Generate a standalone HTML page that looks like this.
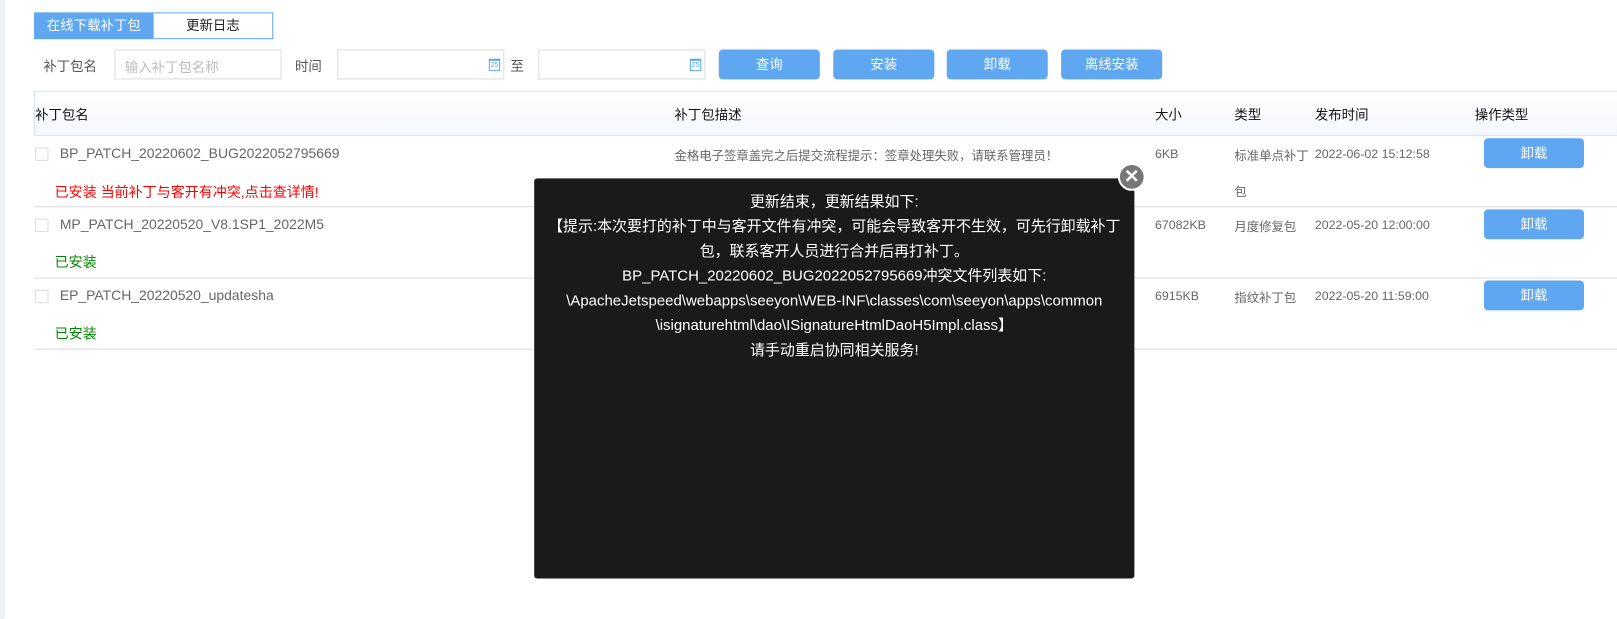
<!DOCTYPE html>
<html><head><meta charset="utf-8"><style>
*{margin:0;padding:0;box-sizing:border-box}
html,body{width:1617px;height:600px;overflow:hidden;background:#fff}
#w{position:absolute;left:0;top:0;width:1568px;height:582px;transform:scale(1.03125);transform-origin:0 0;font-family:"Liberation Sans","Noto Sans CJK SC",sans-serif;font-size:13px;color:#333}
.a{position:absolute;white-space:nowrap}
.btn{position:absolute;background:#5fa7f0;color:#fff;border-radius:4px;text-align:center;font-size:13px}
.inp{position:absolute;border:1px solid #dcdcdc;height:29px;top:48px;background:#fff}
.cal{position:absolute;right:3px;top:8px;width:11px;height:12px;border:1px solid #5fa7f0;border-top-width:2px;font-size:7px;color:#5fa7f0;text-align:center;line-height:9px}
.hl{position:absolute;left:33px;right:0;height:1px;background:#dcdcdc}
.cb{position:absolute;left:34px;width:13px;height:13px;border:1px solid #ddd}
.g{color:#666}
.dl{position:absolute;left:518px;top:173px;width:582px;height:388px;background:#1a1a1a;border-radius:3px;color:#fff;font-size:14.5px;text-align:center;line-height:24px;padding-top:11px}
</style></head><body><div id="w">
<div class="a" style="left:0;top:0;width:5px;height:600px;background:#eef2f7"></div>
<div class="a" style="left:33px;top:12px;width:116px;height:26px;background:#5fa7f0;color:#fff;text-align:center;line-height:26px">在线下载补丁包</div>
<div class="a" style="left:149px;top:12px;width:116px;height:26px;border:1px solid #5fa7f0;border-left:none;text-align:center;line-height:24px;color:#222">更新日志</div>
<div class="a" style="left:42px;top:54px;color:#555">补丁包名</div>
<div class="inp" style="left:111px;width:162px"><span class="a" style="left:9px;top:6px;color:#bbb">输入补丁包名称</span></div>
<div class="a" style="left:286px;top:54px;color:#555">时间</div>
<div class="inp" style="left:327px;width:162px"><div class="cal">25</div></div>
<div class="a" style="left:495px;top:54px;color:#555">至</div>
<div class="inp" style="left:522px;width:162px"><div class="cal">25</div></div>
<div class="btn" style="left:697px;top:48px;width:98px;height:29px;line-height:29px">查询</div>
<div class="btn" style="left:808px;top:48px;width:98px;height:29px;line-height:29px">安装</div>
<div class="btn" style="left:918px;top:48px;width:98px;height:29px;line-height:29px">卸载</div>
<div class="btn" style="left:1029px;top:48px;width:98px;height:29px;line-height:29px">离线安装</div>
<div class="a" style="left:33px;right:0;top:88px;height:44px;background:linear-gradient(#fff,#f3f7fc);border-top:1px solid #d6e6f5;border-bottom:1px solid #d6e6f5;border-left:1px solid #d6e6f5"></div>
<div class="a" style="left:34px;top:101px;color:#111">补丁包名</div>
<div class="a" style="left:654px;top:101px;color:#111">补丁包描述</div>
<div class="a" style="left:1120px;top:101px;color:#111">大小</div>
<div class="a" style="left:1197px;top:101px;color:#111">类型</div>
<div class="a" style="left:1275px;top:101px;color:#111">发布时间</div>
<div class="a" style="left:1430px;top:101px;color:#111">操作类型</div>
<div class="cb" style="top:143px"></div>
<div class="a g" style="left:58px;top:141px;font-size:13.5px">BP_PATCH_20220602_BUG2022052795669</div>
<div class="a g" style="left:654px;top:142px;font-size:12px">金格电子签章盖完之后提交流程提示：签章处理失败，请联系管理员！</div>
<div class="a g" style="left:1120px;top:142px;font-size:12px">6KB</div>
<div class="a g" style="left:1197px;top:142px;font-size:12px">标准单点补丁</div>
<div class="a g" style="left:1197px;top:177px;font-size:12px">包</div>
<div class="a g" style="left:1275px;top:142px;font-size:12px">2022-06-02 15:12:58</div>
<div class="btn" style="left:1439px;top:134px;width:97px;height:29px;line-height:29px">卸载</div>
<div class="a" style="left:53px;top:175px;color:#f00;font-size:13.6px">已安装 当前补丁与客开有冲突,点击查详情!</div>
<div class="hl" style="top:200px"></div>
<div class="cb" style="top:212px"></div>
<div class="a g" style="left:58px;top:210px;font-size:13.5px">MP_PATCH_20220520_V8.1SP1_2022M5</div>
<div class="a g" style="left:1120px;top:211px;font-size:12px">67082KB</div>
<div class="a g" style="left:1197px;top:211px;font-size:12px">月度修复包</div>
<div class="a g" style="left:1275px;top:211px;font-size:12px">2022-05-20 12:00:00</div>
<div class="btn" style="left:1439px;top:203px;width:97px;height:29px;line-height:29px">卸载</div>
<div class="a" style="left:53px;top:243px;color:#080;font-size:13.6px">已安装</div>
<div class="hl" style="top:269px"></div>
<div class="cb" style="top:281px"></div>
<div class="a g" style="left:58px;top:279px;font-size:13.5px">EP_PATCH_20220520_updatesha</div>
<div class="a g" style="left:1120px;top:280px;font-size:12px">6915KB</div>
<div class="a g" style="left:1197px;top:280px;font-size:12px">指纹补丁包</div>
<div class="a g" style="left:1275px;top:280px;font-size:12px">2022-05-20 11:59:00</div>
<div class="btn" style="left:1439px;top:272px;width:97px;height:29px;line-height:29px">卸载</div>
<div class="a" style="left:53px;top:312px;color:#080;font-size:13.6px">已安装</div>
<div class="hl" style="top:338px"></div>
<div class="dl">更新结束，更新结果如下:<br>【提示:本次要打的补丁中与客开文件有冲突，可能会导致客开不生效，可先行卸载补丁<br>包，联系客开人员进行合并后再打补丁。<br>BP_PATCH_20220602_BUG2022052795669冲突文件列表如下:<br>\ApacheJetspeed\webapps\seeyon\WEB-INF\classes\com\seeyon\apps\common<br>\isignaturehtml\dao\ISignatureHtmlDaoH5Impl.class】<br>请手动重启协同相关服务!</div>
<div class="a" style="left:1084px;top:158px;width:27px;height:27px;border-radius:50%;background:#777;border:2px solid #fff;color:#fff;text-align:center;line-height:22px;font-size:18px;font-weight:bold">✕</div>
</div></body></html>
